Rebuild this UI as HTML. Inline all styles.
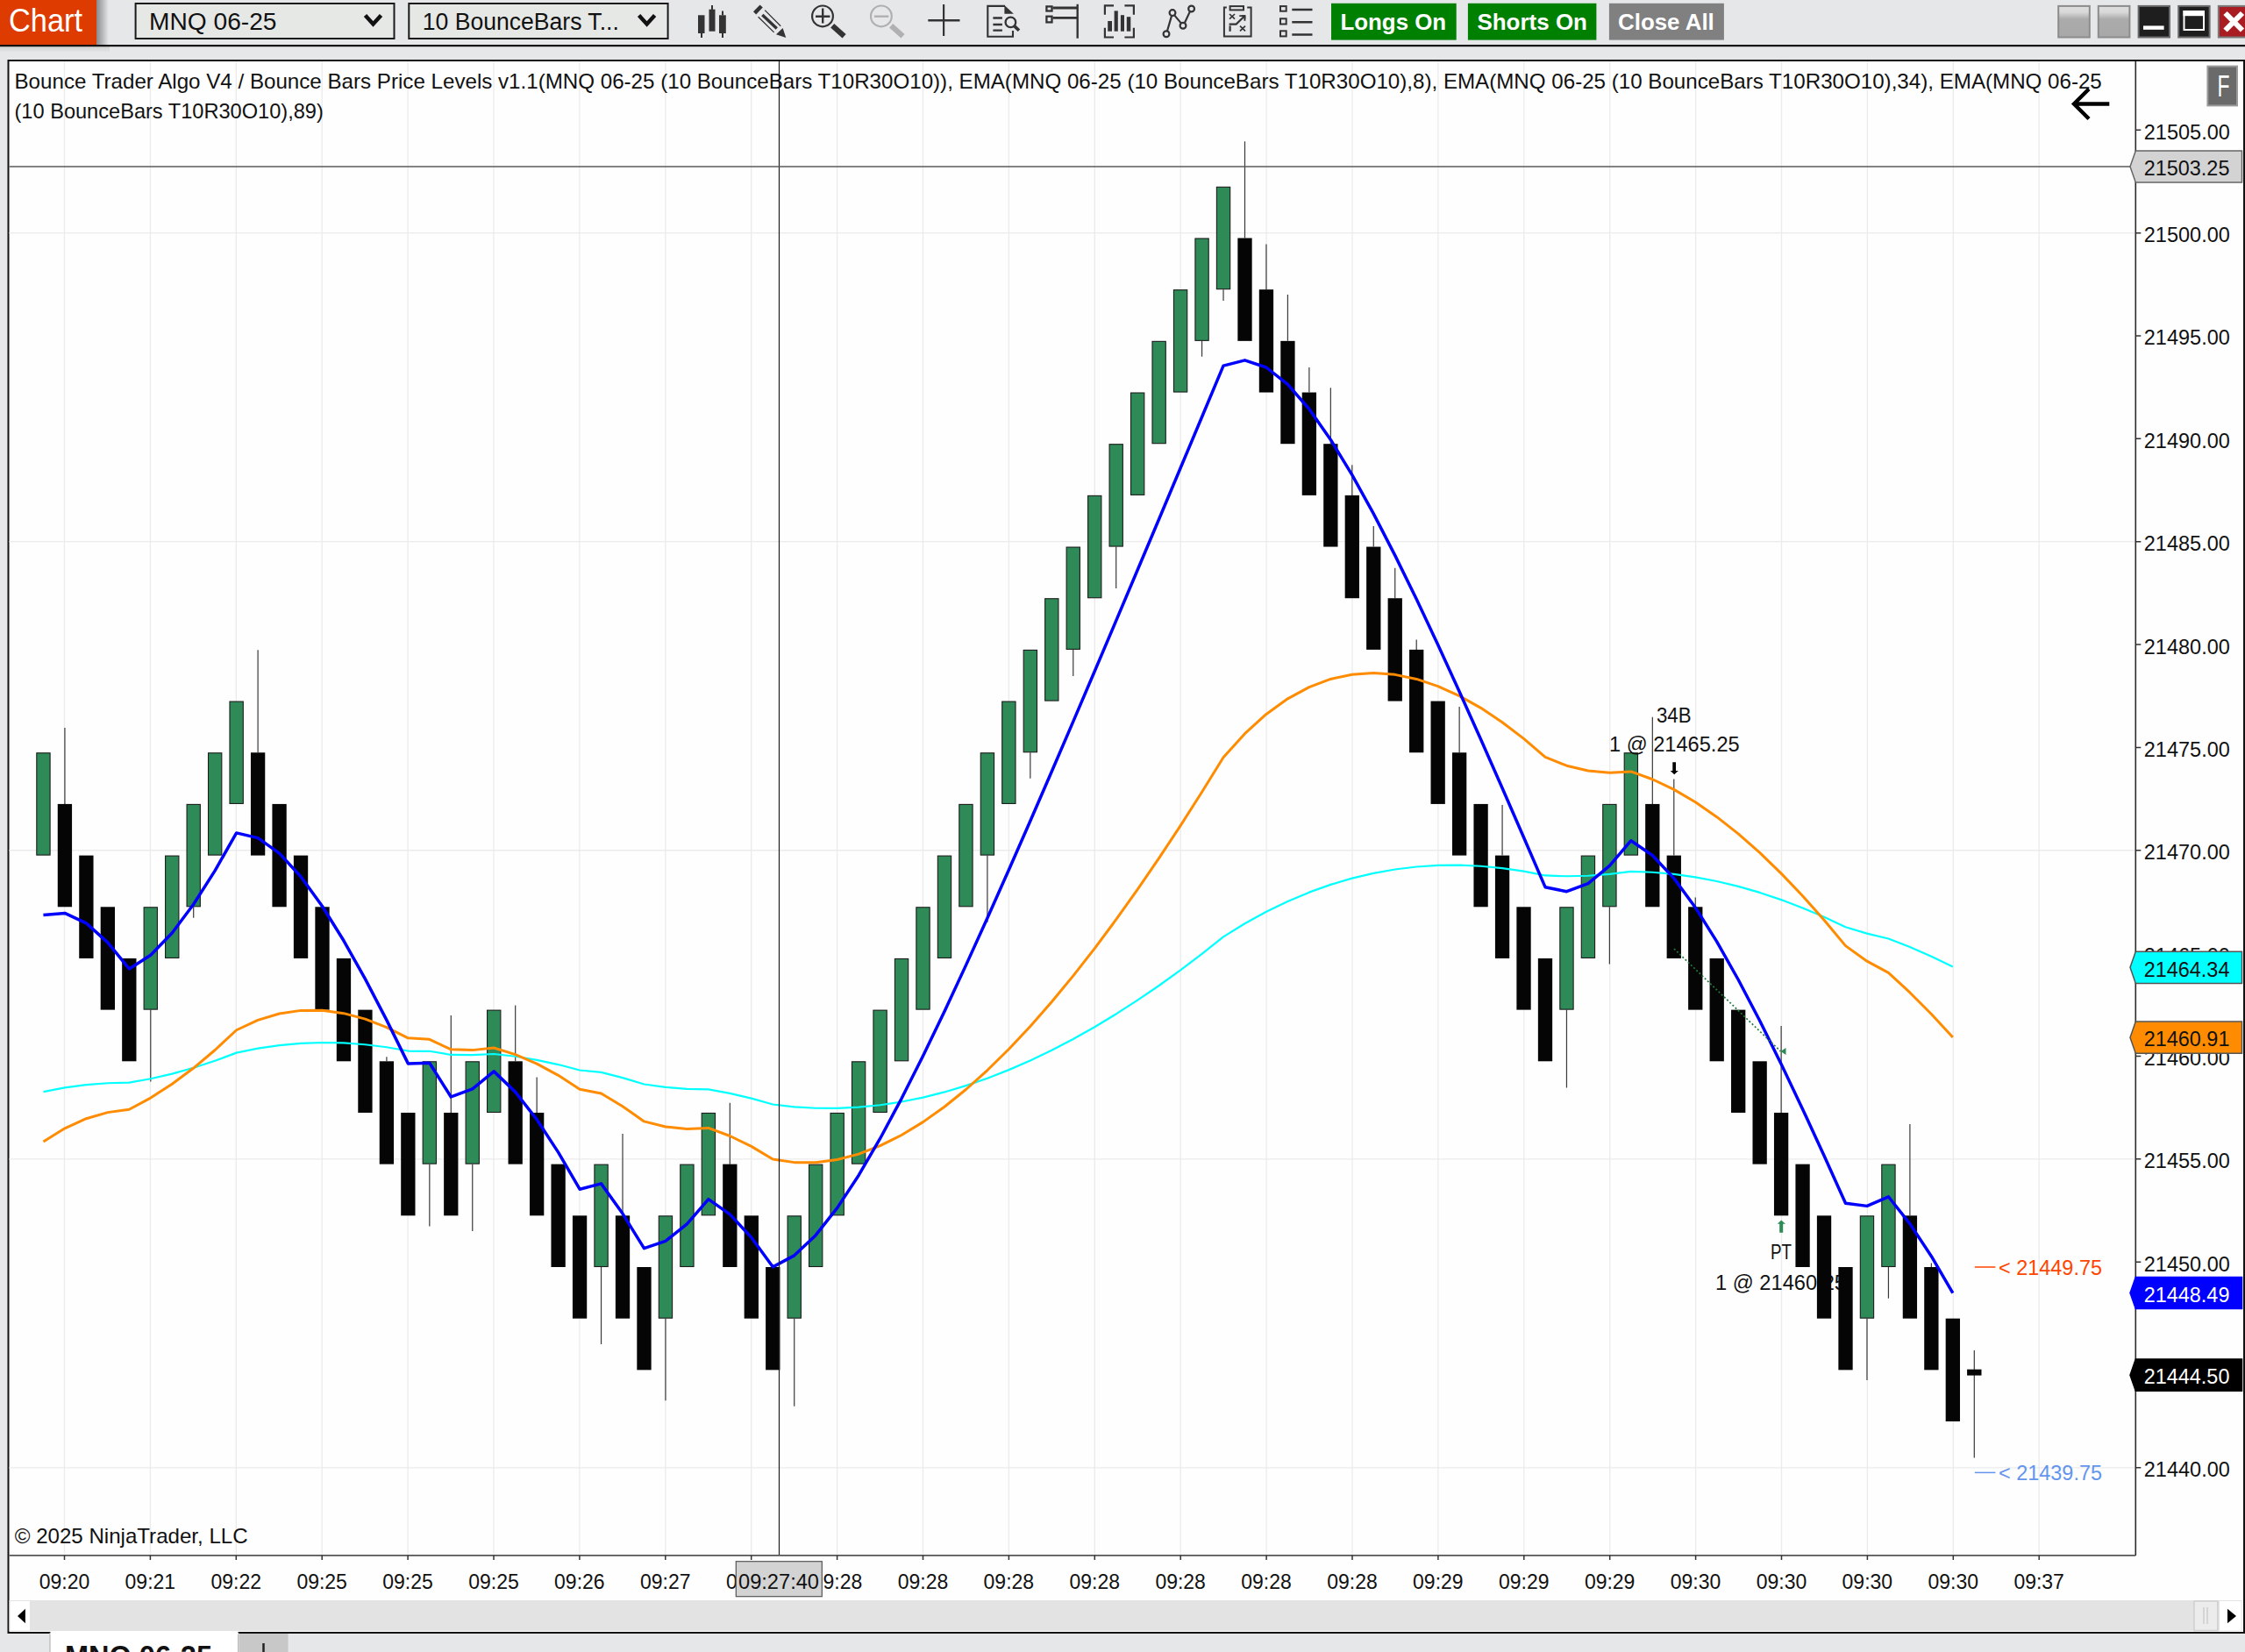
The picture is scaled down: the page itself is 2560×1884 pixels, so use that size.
<!DOCTYPE html>
<html><head><meta charset="utf-8"><title>Chart</title>
<style>html,body{margin:0;padding:0;background:#e6e7e9;width:2560px;height:1884px;overflow:hidden;font-family:"Liberation Sans",sans-serif}svg{display:block}</style>
</head><body>
<svg width="2560" height="1884" viewBox="0 0 2560 1884" font-family="'Liberation Sans', sans-serif"><rect x="0" y="0" width="2560" height="1884" fill="#e6e7e9"/>
<defs><linearGradient id="shd" x1="0" x2="1" y1="0" y2="0"><stop offset="0" stop-color="#8a8b8d"/><stop offset="1" stop-color="#e6e7e9"/></linearGradient><linearGradient id="wbtn" x1="0" x2="0" y1="0" y2="1"><stop offset="0" stop-color="#dedfde"/><stop offset="0.2" stop-color="#d8d8d8"/><stop offset="0.42" stop-color="#ababab"/><stop offset="1" stop-color="#a8a8a8"/></linearGradient></defs>
<rect x="110" y="0" width="14" height="51" fill="url(#shd)"/>
<rect x="0" y="0" width="110" height="51" fill="#dd3b00"/>
<text x="10" y="36" font-size="36" fill="#fff" textLength="84" lengthAdjust="spacingAndGlyphs">Chart</text>
<rect x="154.6" y="4" width="294.9" height="40" fill="#e6e8e6" stroke="#1a1a1a" stroke-width="2"/>
<text x="170.1" y="34.1" font-size="27" fill="#111" textLength="145.4" lengthAdjust="spacingAndGlyphs">MNQ 06-25</text>
<path d="M416.5,17.5 L425.5,27.5 L434.5,17.5" fill="none" stroke="#111" stroke-width="4.5"/>
<rect x="466.3" y="4" width="295.3" height="40" fill="#e6e8e6" stroke="#1a1a1a" stroke-width="2"/>
<text x="481.8" y="34.1" font-size="27" fill="#111" textLength="224" lengthAdjust="spacingAndGlyphs">10 BounceBars T...</text>
<path d="M728.6,17.5 L737.6,27.5 L746.6,17.5" fill="none" stroke="#111" stroke-width="4.5"/>
<g fill="#333"><rect x="796" y="17.3" width="7.5" height="20.7"/><rect x="799" y="38" width="2" height="5"/><rect x="808.5" y="10.7" width="7" height="25"/><rect x="811" y="6" width="2" height="5"/><rect x="820" y="17.3" width="7.8" height="20.7"/><rect x="823" y="12.5" width="2" height="5"/><rect x="823" y="38" width="2" height="5"/></g>
<g fill="#333"><path d="M859,13.2 L866.6,5.6 L869.8,8.6 L862.2,16.4 Z"/><path d="M885,39.3 L892.6,32.1 L896.3,42.9 Z"/></g><g stroke="#333" fill="none"><path d="M872.2,11.6 L890.2,29.7 M864.6,19.2 L882.6,36.9" stroke-width="1.3"/><path d="M869.3,17 L885.8,32.5" stroke-width="3.4"/></g>
<g stroke="#333" fill="none"><circle cx="938" cy="18.4" r="11.9" stroke-width="2.2"/><path d="M930,18.7 H946.4 M938.2,9.6 V26.5" stroke-width="2.4"/><path d="M949.2,29.3 L962.6,41.3" stroke-width="6.2"/></g>
<g stroke="#b0b0b0" fill="none"><circle cx="1004.9" cy="18.4" r="11.9" stroke-width="2.2"/><path d="M996.9,18.7 H1013.3" stroke-width="2.4"/><path d="M1016.1,29.3 L1029.5,41.3" stroke-width="6.2"/></g>
<path d="M1058.3,23.2 H1094.5" stroke="#333" stroke-width="2.6"/><path d="M1076.1,5 V41" stroke="#333" stroke-width="2.2"/>
<g stroke="#333" fill="none" stroke-width="2.1"><path d="M1155,35.1 V41.8 H1126.3 V6.9 H1146"/><path d="M1145.4,5.9 L1155.9,15.8 L1145.4,15.8 Z" fill="#333" stroke="none"/><path d="M1132.4,20.5 H1142.9 M1132.4,28 H1142.9 M1132.4,34.7 H1142.9" stroke-width="2.3"/><circle cx="1152.4" cy="25.4" r="5.8" stroke-width="2.3"/><path d="M1156.6,29.6 L1162,34.8" stroke-width="3.6"/></g>
<g stroke="#333" fill="none" stroke-width="2.3"><rect x="1193.4" y="7.4" width="6.1" height="5.1"/><rect x="1193.4" y="18.7" width="6.1" height="6.7"/><path d="M1200.5,9 H1228.7 M1200.5,20.3 H1228.7" stroke-width="2.8"/><path d="M1228.7,4.8 V43.7" stroke-width="2.4"/></g>
<g fill="none" stroke="#333" stroke-width="2.2"><path d="M1270,6.4 H1259.9 V16.8 M1282.4,6.4 H1292.9 V16.8 M1259.9,31.7 V42.5 H1270 M1292.9,31.7 V42.5 H1282.4"/></g><g fill="#333"><rect x="1263.2" y="24" width="4.8" height="11.7"/><rect x="1270.6" y="12.4" width="4.2" height="23.3"/><rect x="1277.9" y="17.2" width="4.1" height="18.5"/><rect x="1284.8" y="19.2" width="4.5" height="16.5"/></g>
<g fill="none" stroke="#333" stroke-width="2.2"><path d="M1331,35.2 L1336,18.1 M1339.2,17.4 L1347,26.6 M1350.8,26.2 L1356.8,13.4"/><circle cx="1330" cy="38.7" r="3.4"/><circle cx="1337" cy="14.6" r="3.4"/><circle cx="1349" cy="29.3" r="3.4"/><circle cx="1358.6" cy="10" r="3.4"/></g>
<g fill="none" stroke="#333" stroke-width="2"><path d="M1398.8,8.5 H1395.9 V41.6 H1426.6 V8.5 H1422.2"/><rect x="1402.6" y="7.1" width="15.4" height="4.3"/><path d="M1402,16 L1408,21.6 M1408,16 L1402,21.6 M1414,29.6 L1420,35.4 M1420,29.6 L1414,35.4" stroke-width="1.7"/><path d="M1401.6,27.6 H1409.6 L1419,18.6" stroke-width="2.1"/><path d="M1402.6,29.4 V35.8" stroke-width="2.2"/><path d="M1413.3,18.1 H1419.4 V23.8" stroke-width="1.9"/><path d="M1415.6,17.2 H1420.3 V21.9 Z" fill="#333" stroke="none"/></g>
<g fill="none" stroke="#333" stroke-width="2"><rect x="1460" y="7.1" width="6.7" height="5.6"/><rect x="1460" y="21.3" width="6.7" height="6.2"/><rect x="1460" y="35.3" width="6.7" height="6.1"/></g><path d="M1473.3,10.9 H1496.5 M1473.3,25.3 H1496.5 M1473.3,39.5 H1496.5" stroke="#333" stroke-width="2.5"/>
<rect x="1518" y="3.8" width="142.7" height="41.8" fill="#008000"/>
<text x="1528.4" y="34.1" font-size="25" fill="#fff" textLength="120.8" lengthAdjust="spacingAndGlyphs" font-weight="bold">Longs On</text>
<rect x="1673.9" y="3.8" width="146.5" height="41.8" fill="#008000"/>
<text x="1684.4" y="34.1" font-size="25" fill="#fff" textLength="125.6" lengthAdjust="spacingAndGlyphs" font-weight="bold">Shorts On</text>
<rect x="1834.9" y="3.8" width="131" height="41.8" fill="#808080"/>
<text x="1845" y="34.1" font-size="25" fill="#fff" textLength="109.8" lengthAdjust="spacingAndGlyphs" font-weight="bold">Close All</text>
<rect x="2347.2" y="6.9" width="35.6" height="35.6" fill="url(#wbtn)" stroke="#8c8c8c" stroke-width="2"/>
<rect x="2392.8" y="6.9" width="35.6" height="35.6" fill="url(#wbtn)" stroke="#8c8c8c" stroke-width="2"/>
<rect x="2438.6" y="6.9" width="35.4" height="35.6" fill="#1e1e1e" stroke="#6a6a6a" stroke-width="2"/>
<rect x="2444" y="29.4" width="23.6" height="4.4" fill="#fff"/>
<rect x="2484.2" y="6.9" width="35.4" height="35.6" fill="#1e1e1e" stroke="#6a6a6a" stroke-width="2"/>
<rect x="2490.5" y="13" width="22.5" height="21" fill="none" stroke="#fff" stroke-width="2"/><rect x="2489.5" y="12" width="24.5" height="6.2" fill="#fff"/>
<rect x="2529.8" y="6.9" width="35" height="35.6" fill="#a81c22" stroke="#7a7a7a" stroke-width="2"/>
<path d="M2537.5,15 L2557,34.5 M2557,15 L2537.5,34.5" stroke="#fff" stroke-width="6"/>
<defs><linearGradient id="tsh" x1="0" x2="0" y1="0" y2="1"><stop offset="0" stop-color="#d0d1d0"/><stop offset="1" stop-color="#e6e7e9"/></linearGradient></defs><rect x="0" y="53" width="125" height="7" fill="url(#tsh)"/>
<rect x="0" y="51" width="2560" height="2.2" fill="#111"/>
<rect x="9.5" y="69" width="2549.5" height="1793" fill="#fefefe" stroke="#111" stroke-width="2"/>
<path d="M73.5,70 V1773.9 M171.4,70 V1773.9 M269.3,70 V1773.9 M367.2,70 V1773.9 M465.1,70 V1773.9 M563,70 V1773.9 M660.9,70 V1773.9 M758.8,70 V1773.9 M856.7,70 V1773.9 M954.6,70 V1773.9 M1052.5,70 V1773.9 M1150.4,70 V1773.9 M1248.3,70 V1773.9 M1346.2,70 V1773.9 M1444.1,70 V1773.9 M1542,70 V1773.9 M1639.9,70 V1773.9 M1737.8,70 V1773.9 M1835.7,70 V1773.9 M1933.6,70 V1773.9 M2031.5,70 V1773.9 M2129.4,70 V1773.9 M2227.3,70 V1773.9 M2325.2,70 V1773.9 M10.5,265.63 H2435.3 M10.5,617.68 H2435.3 M10.5,969.73 H2435.3 M10.5,1321.78 H2435.3 M10.5,1673.83 H2435.3" stroke="#ebebeb" stroke-width="1.3" fill="none"/>
<text x="1956" y="1471" font-size="23" fill="#111" textLength="149" lengthAdjust="spacingAndGlyphs">1 @ 21460.25</text>
<path d="M73.92,830 V916.92 M171.78,1151.62 V1233.5 M220.7,1034.27 V1046.7 M294.1,741.2 V858.25 M440.89,1205.3 V1210.3 M489.82,1327.65 V1398.5 M514.28,1158 V1268.97 M538.75,1327.65 V1404 M587.68,1146.5 V1210.3 M612.15,1228.4 V1268.97 M685.54,1445 V1533.1 M710,1293.1 V1386.32 M758.94,1503.67 V1597.3 M832.33,1257.8 V1327.65 M905.73,1503.67 V1603.7 M1125.91,975.6 V1051.7 M1174.84,858.25 V887.8 M1223.77,740.9 V770.9 M1272.7,623.55 V670.9 M1370.56,388.85 V406.7 M1395.03,330.18 V342.9 M1419.49,161.3 V271.5 M1443.95,278.4 V330.18 M1468.42,336 V388.85 M1492.88,419 V447.53 M1517.35,442.2 V506.2 M1541.82,530.2 V564.88 M1566.28,600.1 V623.55 M1590.75,647.7 V682.23 M1615.21,729.4 V740.9 M1664.14,806.1 V858.25 M1713.07,917.9 V975.6 M1786.47,1151.62 V1240.6 M1835.39,1034.27 V1099.6 M1884.33,817.8 V916.92 M1908.79,888.6 V975.6 M1933.26,1023.4 V1034.28 M2031.12,1170 V1268.97 M2128.97,1503.67 V1574 M2153.44,1445 V1480.7 M2177.9,1281.9 V1386.32 M2202.37,1440.4 V1445 M2251.3,1540 V1662.5" stroke="#3a3a3a" stroke-width="1.2" fill="none"/>
<g fill="#050505"><rect x="65.77" y="916.92" width="16.3" height="117.35"/><rect x="90.23" y="975.6" width="16.3" height="117.35"/><rect x="114.69" y="1034.28" width="16.3" height="117.35"/><rect x="139.16" y="1092.95" width="16.3" height="117.35"/><rect x="285.95" y="858.25" width="16.3" height="117.35"/><rect x="310.42" y="916.92" width="16.3" height="117.35"/><rect x="334.88" y="975.6" width="16.3" height="117.35"/><rect x="359.35" y="1034.28" width="16.3" height="117.35"/><rect x="383.81" y="1092.95" width="16.3" height="117.35"/><rect x="408.28" y="1151.62" width="16.3" height="117.35"/><rect x="432.74" y="1210.3" width="16.3" height="117.35"/><rect x="457.2" y="1268.97" width="16.3" height="117.35"/><rect x="506.13" y="1268.97" width="16.3" height="117.35"/><rect x="579.53" y="1210.3" width="16.3" height="117.35"/><rect x="604" y="1268.97" width="16.3" height="117.35"/><rect x="628.46" y="1327.65" width="16.3" height="117.35"/><rect x="652.93" y="1386.32" width="16.3" height="117.35"/><rect x="701.86" y="1386.32" width="16.3" height="117.35"/><rect x="726.32" y="1445" width="16.3" height="117.35"/><rect x="824.18" y="1327.65" width="16.3" height="117.35"/><rect x="848.65" y="1386.32" width="16.3" height="117.35"/><rect x="873.11" y="1445" width="16.3" height="117.35"/><rect x="1411.34" y="271.5" width="16.3" height="117.35"/><rect x="1435.8" y="330.18" width="16.3" height="117.35"/><rect x="1460.27" y="388.85" width="16.3" height="117.35"/><rect x="1484.73" y="447.53" width="16.3" height="117.35"/><rect x="1509.2" y="506.2" width="16.3" height="117.35"/><rect x="1533.66" y="564.88" width="16.3" height="117.35"/><rect x="1558.13" y="623.55" width="16.3" height="117.35"/><rect x="1582.6" y="682.23" width="16.3" height="117.35"/><rect x="1607.06" y="740.9" width="16.3" height="117.35"/><rect x="1631.52" y="799.58" width="16.3" height="117.35"/><rect x="1655.99" y="858.25" width="16.3" height="117.35"/><rect x="1680.45" y="916.92" width="16.3" height="117.35"/><rect x="1704.92" y="975.6" width="16.3" height="117.35"/><rect x="1729.38" y="1034.28" width="16.3" height="117.35"/><rect x="1753.85" y="1092.95" width="16.3" height="117.35"/><rect x="1876.17" y="916.92" width="16.3" height="117.35"/><rect x="1900.64" y="975.6" width="16.3" height="117.35"/><rect x="1925.11" y="1034.28" width="16.3" height="117.35"/><rect x="1949.57" y="1092.95" width="16.3" height="117.35"/><rect x="1974.03" y="1151.62" width="16.3" height="117.35"/><rect x="1998.5" y="1210.3" width="16.3" height="117.35"/><rect x="2022.96" y="1268.97" width="16.3" height="117.35"/><rect x="2047.43" y="1327.65" width="16.3" height="117.35"/><rect x="2071.89" y="1386.32" width="16.3" height="117.35"/><rect x="2096.36" y="1445" width="16.3" height="117.35"/><rect x="2169.75" y="1386.32" width="16.3" height="117.35"/><rect x="2194.22" y="1445" width="16.3" height="117.35"/><rect x="2218.68" y="1503.67" width="16.3" height="117.35"/><rect x="2243.1" y="1561.7" width="16.4" height="6.9"/></g>
<g fill="#2e8b57" stroke="#1c1c1c" stroke-width="1.1"><rect x="41.8" y="858.75" width="15.3" height="116.35"/><rect x="164.12" y="1034.78" width="15.3" height="116.35"/><rect x="188.59" y="976.1" width="15.3" height="116.35"/><rect x="213.05" y="917.42" width="15.3" height="116.35"/><rect x="237.52" y="858.75" width="15.3" height="116.35"/><rect x="261.99" y="800.08" width="15.3" height="116.35"/><rect x="482.17" y="1210.8" width="15.3" height="116.35"/><rect x="531.1" y="1210.8" width="15.3" height="116.35"/><rect x="555.57" y="1152.12" width="15.3" height="116.35"/><rect x="677.89" y="1328.15" width="15.3" height="116.35"/><rect x="751.29" y="1386.82" width="15.3" height="116.35"/><rect x="775.75" y="1328.15" width="15.3" height="116.35"/><rect x="800.22" y="1269.47" width="15.3" height="116.35"/><rect x="898.08" y="1386.82" width="15.3" height="116.35"/><rect x="922.54" y="1328.15" width="15.3" height="116.35"/><rect x="947.01" y="1269.47" width="15.3" height="116.35"/><rect x="971.47" y="1210.8" width="15.3" height="116.35"/><rect x="995.94" y="1152.12" width="15.3" height="116.35"/><rect x="1020.4" y="1093.45" width="15.3" height="116.35"/><rect x="1044.86" y="1034.78" width="15.3" height="116.35"/><rect x="1069.33" y="976.1" width="15.3" height="116.35"/><rect x="1093.79" y="917.42" width="15.3" height="116.35"/><rect x="1118.26" y="858.75" width="15.3" height="116.35"/><rect x="1142.72" y="800.08" width="15.3" height="116.35"/><rect x="1167.19" y="741.4" width="15.3" height="116.35"/><rect x="1191.65" y="682.73" width="15.3" height="116.35"/><rect x="1216.12" y="624.05" width="15.3" height="116.35"/><rect x="1240.59" y="565.38" width="15.3" height="116.35"/><rect x="1265.05" y="506.7" width="15.3" height="116.35"/><rect x="1289.51" y="448.03" width="15.3" height="116.35"/><rect x="1313.98" y="389.35" width="15.3" height="116.35"/><rect x="1338.44" y="330.68" width="15.3" height="116.35"/><rect x="1362.91" y="272" width="15.3" height="116.35"/><rect x="1387.38" y="213.33" width="15.3" height="116.35"/><rect x="1778.82" y="1034.78" width="15.3" height="116.35"/><rect x="1803.28" y="976.1" width="15.3" height="116.35"/><rect x="1827.74" y="917.42" width="15.3" height="116.35"/><rect x="1852.21" y="858.75" width="15.3" height="116.35"/><rect x="2121.32" y="1386.82" width="15.3" height="116.35"/><rect x="2145.79" y="1328.15" width="15.3" height="116.35"/></g>
<polyline points="49.45,1245.1 73.92,1240.42 98.38,1237.14 122.84,1235.24 147.31,1234.68 171.78,1230.23 196.24,1224.57 220.7,1217.73 245.17,1209.75 269.63,1200.63 294.1,1195.63 318.56,1192.05 343.03,1189.84 367.5,1188.99 391.96,1189.47 416.43,1191.23 440.89,1194.27 465.35,1198.53 489.82,1198.79 514.28,1202.96 538.75,1203.13 563.22,1201.98 587.68,1204.77 612.15,1208.81 636.61,1214.06 661.08,1220.49 685.54,1222.87 710,1229.11 734.47,1236.52 758.94,1239.85 783.4,1241.8 807.87,1242.4 832.33,1246.91 856.8,1252.61 881.26,1259.49 905.73,1262.31 930.19,1263.76 954.66,1263.88 979.12,1262.69 1003.59,1260.22 1028.05,1256.5 1052.51,1251.57 1076.98,1245.43 1101.44,1238.13 1125.91,1229.69 1150.38,1220.13 1174.84,1209.48 1199.31,1197.77 1223.77,1185.01 1248.24,1171.23 1272.7,1156.45 1297.16,1140.69 1321.63,1123.99 1346.1,1106.35 1370.56,1087.79 1395.03,1068.35 1419.49,1053.25 1443.95,1039.79 1468.42,1027.93 1492.88,1017.64 1517.35,1008.88 1541.82,1001.63 1566.28,995.83 1590.75,991.47 1615.21,988.51 1639.67,986.92 1664.14,986.67 1688.61,987.73 1713.07,990.06 1737.54,993.65 1762,998.47 1786.47,999.26 1810.93,998.74 1835.39,996.92 1859.86,993.84 1884.33,994.74 1908.79,996.92 1933.26,1000.36 1957.72,1005.02 1982.18,1010.89 2006.65,1017.93 2031.12,1026.11 2055.58,1035.42 2080.05,1045.83 2104.51,1057.31 2128.97,1064.62 2153.44,1070.46 2177.9,1080.09 2202.37,1090.81 2226.83,1102.59" fill="none" stroke="#00ffff" stroke-width="2.2" stroke-linejoin="round"/>
<polyline points="49.45,1302.1 73.92,1286.8 98.38,1275.72 122.84,1268.63 147.31,1265.29 171.78,1252.09 196.24,1236.29 220.7,1218.04 245.17,1197.48 269.63,1174.75 294.1,1163.37 318.56,1155.99 343.03,1152.39 367.5,1152.34 391.96,1155.66 416.43,1162.13 440.89,1171.59 465.35,1183.86 489.82,1185.37 514.28,1196.85 538.75,1197.62 563.22,1194.99 587.68,1202.57 612.15,1213.07 636.61,1226.33 661.08,1242.18 685.54,1247.06 710,1261.72 734.47,1278.9 758.94,1285.04 783.4,1287.48 807.87,1286.42 832.33,1295.48 856.8,1307.38 881.26,1321.95 905.73,1325.63 930.19,1325.74 954.66,1322.5 979.12,1316.09 1003.59,1306.69 1028.05,1294.47 1052.51,1279.61 1076.98,1262.23 1101.44,1242.5 1125.91,1220.55 1150.38,1196.49 1174.84,1170.46 1199.31,1142.56 1223.77,1112.9 1248.24,1081.58 1272.7,1048.7 1297.16,1014.35 1321.63,978.61 1346.1,941.56 1370.56,903.27 1395.03,863.81 1419.49,836.67 1443.95,814.44 1468.42,796.82 1492.88,783.57 1517.35,774.42 1541.82,769.16 1566.28,767.54 1590.75,769.37 1615.21,774.45 1639.67,782.59 1664.14,793.62 1688.61,807.37 1713.07,823.69 1737.54,842.43 1762,863.45 1786.47,873.21 1810.93,879.06 1835.39,881.23 1859.86,879.91 1884.33,888.73 1908.79,900.4 1933.26,914.76 1957.72,931.65 1982.18,950.92 2006.65,972.45 2031.12,996.1 2055.58,1021.75 2080.05,1049.29 2104.51,1078.61 2128.97,1096.19 2153.44,1109.42 2177.9,1131.95 2202.37,1156.54 2226.83,1183.08" fill="none" stroke="#ff8c00" stroke-width="3" stroke-linejoin="round"/>
<polyline points="49.45,1043.5 73.92,1041.45 98.38,1052.89 122.84,1074.83 147.31,1104.94 171.78,1089.24 196.24,1063.98 220.7,1031.3 245.17,992.85 269.63,949.9 294.1,955.61 318.56,973.09 343.03,999.73 367.5,1033.48 391.96,1072.77 416.43,1116.37 440.89,1163.32 465.35,1212.88 489.82,1212.31 514.28,1250.98 538.75,1241.94 563.22,1221.87 587.68,1245.38 612.15,1276.7 636.61,1314.1 661.08,1356.23 685.54,1349.88 710,1384.05 734.47,1423.68 758.94,1415.38 783.4,1395.88 807.87,1367.68 832.33,1384.86 856.8,1411.26 881.26,1444.84 905.73,1431.84 930.19,1408.68 954.66,1377.64 979.12,1340.45 1003.59,1298.49 1028.05,1252.81 1052.51,1204.25 1076.98,1153.44 1101.44,1100.88 1125.91,1046.96 1150.38,991.99 1174.84,936.19 1199.31,879.75 1223.77,822.82 1248.24,765.5 1272.7,707.88 1297.16,650.02 1321.63,591.98 1346.1,533.8 1370.56,475.51 1395.03,417.14 1419.49,410.85 1443.95,419 1468.42,438.38 1492.88,466.49 1517.35,501.39 1541.82,541.58 1566.28,585.87 1590.75,633.36 1615.21,683.34 1639.67,735.24 1664.14,788.66 1688.61,843.24 1713.07,898.73 1737.54,954.93 1762,1011.68 1786.47,1016.7 1810.93,1007.57 1835.39,987.42 1859.86,958.72 1884.33,975.51 1908.79,1001.61 1933.26,1034.94 1957.72,1073.91 1982.18,1117.26 2006.65,1164.01 2031.12,1213.42 2055.58,1264.88 2080.05,1317.94 2104.51,1372.26 2128.97,1375.38 2153.44,1364.78 2177.9,1395.64 2202.37,1432.69 2226.83,1474.54" fill="none" stroke="#0000ff" stroke-width="3.5" stroke-linejoin="round"/>
<path d="M888.5,70 V1773" stroke="#1e1e1e" stroke-width="1.2"/>
<path d="M10.5,190 H2430" stroke="#5a5a5a" stroke-width="1.6"/>
<path d="M2435.3,70 V1773.9" stroke="#2a2a2a" stroke-width="1.6"/>
<path d="M10.5,1773.9 H2435.3" stroke="#555" stroke-width="1.6"/>
<path d="M2435.3,148.28 H2441.3 M2435.3,265.63 H2441.3 M2435.3,382.98 H2441.3 M2435.3,500.33 H2441.3 M2435.3,617.68 H2441.3 M2435.3,735.03 H2441.3 M2435.3,852.38 H2441.3 M2435.3,969.73 H2441.3 M2435.3,1087.08 H2441.3 M2435.3,1204.43 H2441.3 M2435.3,1321.78 H2441.3 M2435.3,1439.13 H2441.3 M2435.3,1556.48 H2441.3 M2435.3,1673.83 H2441.3 M73.5,1773.9 V1778.9 M171.4,1773.9 V1778.9 M269.3,1773.9 V1778.9 M367.2,1773.9 V1778.9 M465.1,1773.9 V1778.9 M563,1773.9 V1778.9 M660.9,1773.9 V1778.9 M758.8,1773.9 V1778.9 M856.7,1773.9 V1778.9 M954.6,1773.9 V1778.9 M1052.5,1773.9 V1778.9 M1150.4,1773.9 V1778.9 M1248.3,1773.9 V1778.9 M1346.2,1773.9 V1778.9 M1444.1,1773.9 V1778.9 M1542,1773.9 V1778.9 M1639.9,1773.9 V1778.9 M1737.8,1773.9 V1778.9 M1835.7,1773.9 V1778.9 M1933.6,1773.9 V1778.9 M2031.5,1773.9 V1778.9 M2129.4,1773.9 V1778.9 M2227.3,1773.9 V1778.9 M2325.2,1773.9 V1778.9" stroke="#333" stroke-width="1.5"/>
<text x="2444.8" y="158.78" font-size="24" fill="#111" textLength="98" lengthAdjust="spacingAndGlyphs">21505.00</text>
<text x="2444.8" y="276.13" font-size="24" fill="#111" textLength="98" lengthAdjust="spacingAndGlyphs">21500.00</text>
<text x="2444.8" y="393.48" font-size="24" fill="#111" textLength="98" lengthAdjust="spacingAndGlyphs">21495.00</text>
<text x="2444.8" y="510.83" font-size="24" fill="#111" textLength="98" lengthAdjust="spacingAndGlyphs">21490.00</text>
<text x="2444.8" y="628.18" font-size="24" fill="#111" textLength="98" lengthAdjust="spacingAndGlyphs">21485.00</text>
<text x="2444.8" y="745.53" font-size="24" fill="#111" textLength="98" lengthAdjust="spacingAndGlyphs">21480.00</text>
<text x="2444.8" y="862.88" font-size="24" fill="#111" textLength="98" lengthAdjust="spacingAndGlyphs">21475.00</text>
<text x="2444.8" y="980.23" font-size="24" fill="#111" textLength="98" lengthAdjust="spacingAndGlyphs">21470.00</text>
<text x="2444.8" y="1097.58" font-size="24" fill="#111" textLength="98" lengthAdjust="spacingAndGlyphs">21465.00</text>
<text x="2444.8" y="1214.93" font-size="24" fill="#111" textLength="98" lengthAdjust="spacingAndGlyphs">21460.00</text>
<text x="2444.8" y="1332.28" font-size="24" fill="#111" textLength="98" lengthAdjust="spacingAndGlyphs">21455.00</text>
<text x="2444.8" y="1449.63" font-size="24" fill="#111" textLength="98" lengthAdjust="spacingAndGlyphs">21450.00</text>
<text x="2444.8" y="1566.98" font-size="24" fill="#111" textLength="98" lengthAdjust="spacingAndGlyphs">21445.00</text>
<text x="2444.8" y="1684.33" font-size="24" fill="#111" textLength="98" lengthAdjust="spacingAndGlyphs">21440.00</text>
<text x="44.7" y="1811.5" font-size="24" fill="#111" textLength="57.5" lengthAdjust="spacingAndGlyphs">09:20</text>
<text x="142.6" y="1811.5" font-size="24" fill="#111" textLength="57.5" lengthAdjust="spacingAndGlyphs">09:21</text>
<text x="240.5" y="1811.5" font-size="24" fill="#111" textLength="57.5" lengthAdjust="spacingAndGlyphs">09:22</text>
<text x="338.4" y="1811.5" font-size="24" fill="#111" textLength="57.5" lengthAdjust="spacingAndGlyphs">09:25</text>
<text x="436.3" y="1811.5" font-size="24" fill="#111" textLength="57.5" lengthAdjust="spacingAndGlyphs">09:25</text>
<text x="534.2" y="1811.5" font-size="24" fill="#111" textLength="57.5" lengthAdjust="spacingAndGlyphs">09:25</text>
<text x="632.1" y="1811.5" font-size="24" fill="#111" textLength="57.5" lengthAdjust="spacingAndGlyphs">09:26</text>
<text x="730" y="1811.5" font-size="24" fill="#111" textLength="57.5" lengthAdjust="spacingAndGlyphs">09:27</text>
<text x="827.9" y="1811.5" font-size="24" fill="#111" textLength="57.5" lengthAdjust="spacingAndGlyphs">09:28</text>
<text x="925.8" y="1811.5" font-size="24" fill="#111" textLength="57.5" lengthAdjust="spacingAndGlyphs">09:28</text>
<text x="1023.7" y="1811.5" font-size="24" fill="#111" textLength="57.5" lengthAdjust="spacingAndGlyphs">09:28</text>
<text x="1121.6" y="1811.5" font-size="24" fill="#111" textLength="57.5" lengthAdjust="spacingAndGlyphs">09:28</text>
<text x="1219.5" y="1811.5" font-size="24" fill="#111" textLength="57.5" lengthAdjust="spacingAndGlyphs">09:28</text>
<text x="1317.4" y="1811.5" font-size="24" fill="#111" textLength="57.5" lengthAdjust="spacingAndGlyphs">09:28</text>
<text x="1415.3" y="1811.5" font-size="24" fill="#111" textLength="57.5" lengthAdjust="spacingAndGlyphs">09:28</text>
<text x="1513.2" y="1811.5" font-size="24" fill="#111" textLength="57.5" lengthAdjust="spacingAndGlyphs">09:28</text>
<text x="1611.1" y="1811.5" font-size="24" fill="#111" textLength="57.5" lengthAdjust="spacingAndGlyphs">09:29</text>
<text x="1709" y="1811.5" font-size="24" fill="#111" textLength="57.5" lengthAdjust="spacingAndGlyphs">09:29</text>
<text x="1806.9" y="1811.5" font-size="24" fill="#111" textLength="57.5" lengthAdjust="spacingAndGlyphs">09:29</text>
<text x="1904.8" y="1811.5" font-size="24" fill="#111" textLength="57.5" lengthAdjust="spacingAndGlyphs">09:30</text>
<text x="2002.7" y="1811.5" font-size="24" fill="#111" textLength="57.5" lengthAdjust="spacingAndGlyphs">09:30</text>
<text x="2100.6" y="1811.5" font-size="24" fill="#111" textLength="57.5" lengthAdjust="spacingAndGlyphs">09:30</text>
<text x="2198.5" y="1811.5" font-size="24" fill="#111" textLength="57.5" lengthAdjust="spacingAndGlyphs">09:30</text>
<text x="2296.4" y="1811.5" font-size="24" fill="#111" textLength="57.5" lengthAdjust="spacingAndGlyphs">09:37</text>
<path d="M2429,190 L2435.3,171.9 H2556.5 V208.1 H2435.3 Z" fill="#d3d3d3" stroke="#666" stroke-width="1.5"/>
<text x="2444.8" y="200.2" font-size="24" fill="#111" textLength="97.6" lengthAdjust="spacingAndGlyphs">21503.25</text>
<path d="M2429,1103.3 L2435.3,1085.2 H2556.5 V1121.4 H2435.3 Z" fill="#00ffff" stroke="#555" stroke-width="1.5"/>
<text x="2444.8" y="1113.5" font-size="24" fill="#111" textLength="97.6" lengthAdjust="spacingAndGlyphs">21464.34</text>
<path d="M2429,1183.2 L2435.3,1165.1 H2556.5 V1201.3 H2435.3 Z" fill="#ff8c00" stroke="#555" stroke-width="1.5"/>
<text x="2444.8" y="1193.4" font-size="24" fill="#111" textLength="97.6" lengthAdjust="spacingAndGlyphs">21460.91</text>
<path d="M2429,1474.5 L2435.3,1456.4 H2556.5 V1492.6 H2435.3 Z" fill="#0000ff" stroke="#0000ff" stroke-width="1.5"/>
<text x="2444.8" y="1484.7" font-size="24" fill="#fff" textLength="97.6" lengthAdjust="spacingAndGlyphs">21448.49</text>
<path d="M2429,1568.2 L2435.3,1550.1 H2556.5 V1586.3 H2435.3 Z" fill="#000" stroke="#000" stroke-width="1.5"/>
<text x="2444.8" y="1578.4" font-size="24" fill="#fff" textLength="97.6" lengthAdjust="spacingAndGlyphs">21444.50</text>
<rect x="839.3" y="1780.7" width="98" height="40" fill="#d3d3d3" stroke="#555" stroke-width="1.2"/>
<text x="842" y="1811.5" font-size="24" fill="#111" textLength="92" lengthAdjust="spacingAndGlyphs">09:27:40</text>
<text x="16.5" y="101.1" font-size="24" fill="#111" textLength="2380.3" lengthAdjust="spacingAndGlyphs">Bounce Trader Algo V4 / Bounce Bars Price Levels v1.1(MNQ 06-25 (10 BounceBars T10R30O10)), EMA(MNQ 06-25 (10 BounceBars T10R30O10),8), EMA(MNQ 06-25 (10 BounceBars T10R30O10),34), EMA(MNQ 06-25</text>
<text x="16.5" y="135.4" font-size="24" fill="#111" textLength="352.3" lengthAdjust="spacingAndGlyphs">(10 BounceBars T10R30O10),89)</text>
<rect x="2517.4" y="75.6" width="33.6" height="44.8" fill="#6a6a6a" stroke="#9a9a9a" stroke-width="2"/>
<text x="2528.6" y="109.7" font-size="35" fill="#fff" textLength="14" lengthAdjust="spacingAndGlyphs">F</text>
<path d="M2405.3,118.5 H2366 M2382,101.5 L2365,118.5 L2382,135.5" fill="none" stroke="#000" stroke-width="4.4"/>
<text x="16.7" y="1760.1" font-size="24" fill="#111" textLength="265.9" lengthAdjust="spacingAndGlyphs">© 2025 NinjaTrader, LLC</text>
<text x="1889" y="824" font-size="23" fill="#111" textLength="39.6" lengthAdjust="spacingAndGlyphs">34B</text>
<text x="1835" y="857.1" font-size="23" fill="#111" textLength="148.7" lengthAdjust="spacingAndGlyphs">1 @ 21465.25</text>
<path d="M1907.3,869.2 H1911 V879 H1913.8 L1909.2,883.3 L1904.7,879 H1907.3 Z" fill="#000"/>
<text x="2019" y="1436.4" font-size="23" fill="#111" textLength="24" lengthAdjust="spacingAndGlyphs">PT</text>
<path d="M2029.2,1405.7 H2033.2 V1395.8 H2036 L2031.3,1391.6 L2026.7,1395.8 H2029.2 Z" fill="#2e8b57"/>
<path d="M1909,1082 L2030.3,1198.8" stroke="#1f7a3c" stroke-width="1.7" stroke-dasharray="2,2.4"/>
<path d="M2036.5,1195 L2030.5,1199 L2036.5,1203 Z" fill="#2e8b57"/>
<path d="M2251.8,1445 H2275.4" stroke="#ff4500" stroke-width="1.5"/>
<text x="2279" y="1453.6" font-size="23" fill="#ff4500" textLength="118" lengthAdjust="spacingAndGlyphs">&lt; 21449.75</text>
<path d="M2251.8,1679.4 H2275.4" stroke="#6495ed" stroke-width="1.5"/>
<text x="2279" y="1688" font-size="23" fill="#6495ed" textLength="118" lengthAdjust="spacingAndGlyphs">&lt; 21439.75</text>
<rect x="10.5" y="1825" width="2546" height="35" fill="#e3e3e3"/>
<rect x="11.6" y="1826" width="22.3" height="33.5" fill="#fff"/>
<path d="M28.9,1834.8 L20,1843 L28.9,1851.2 Z" fill="#000"/>
<rect x="2502" y="1826" width="26.8" height="33.5" fill="#ececec" stroke="#cfcfcf" stroke-width="1.5"/>
<path d="M2513,1833 V1852 M2517,1833 V1852" stroke="#bdbdbd" stroke-width="1"/>
<rect x="2531" y="1826" width="24.6" height="33.5" fill="#fff"/>
<path d="M2540,1834.8 L2550,1843 L2540,1851.2 Z" fill="#000"/>
<rect x="57" y="1862.5" width="214.7" height="30" fill="#fff" stroke="#aaa" stroke-width="1"/>
<rect x="57.5" y="1861" width="214" height="3" fill="#fff"/>
<text x="74" y="1899.8" font-size="33" fill="#111" textLength="168" lengthAdjust="spacingAndGlyphs" font-weight="bold">MNQ 06-25</text>
<rect x="272.6" y="1863" width="56" height="30" fill="#c8c8c8"/>
<path d="M300.5,1874 V1890" stroke="#222" stroke-width="2.5"/></svg>
</body></html>
